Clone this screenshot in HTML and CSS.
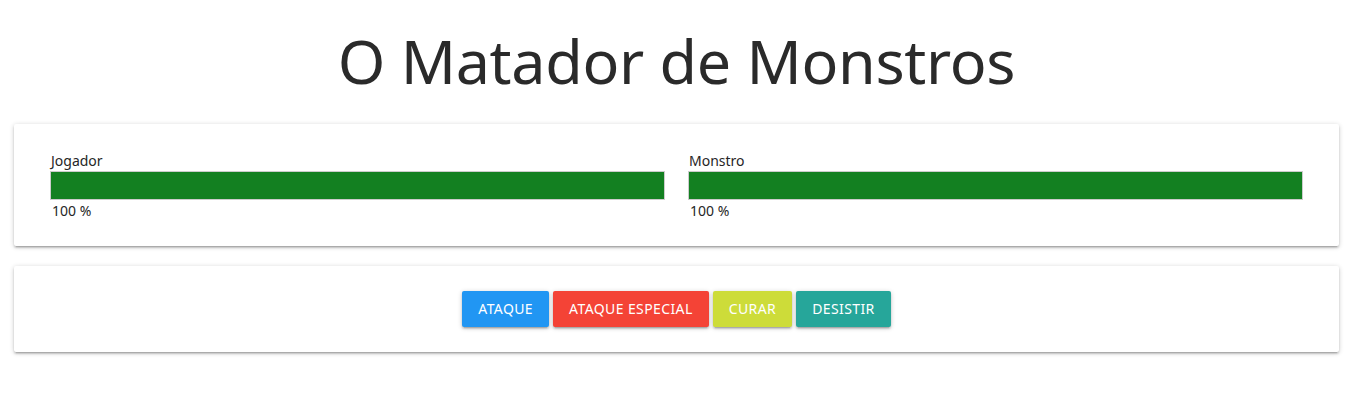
FILE: index.html
```html
<!DOCTYPE html>
<html lang="pt">
<head>
<meta charset="utf-8">
<title>O Matador de Monstros</title>
<link rel="stylesheet" href="styles.css">
</head>
<body>
<h1 class="title">O Matador de Monstros</h1>
<section class="card scores">
  <div class="score">
    <div class="label">Jogador</div>
    <div class="bar"><div class="fill" style="width: 100%"></div></div>
    <div class="pct">100 %</div>
  </div>
  <div class="score">
    <div class="label">Monstro</div>
    <div class="bar"><div class="fill" style="width: 100%"></div></div>
    <div class="pct">100 %</div>
  </div>
</section>
<section class="card actions">
  <button class="btn btn-blue">Ataque</button>
  <button class="btn btn-red">Ataque especial</button>
  <button class="btn btn-lime">Curar</button>
  <button class="btn btn-teal">Desistir</button>
</section>
</body>
</html>
```
FILE: styles.css
```css
html, body {
  margin: 0;
  padding: 0;
  background: #fff;
}
body {
  font-family: "Noto Sans", "Open Sans", sans-serif;
  color: #262626;
  padding: 0 13px 40px 14px;
}
.title {
  margin: 0;
  padding-top: 26px;
  height: 98px;
  box-sizing: border-box;
  text-align: center;
  font-weight: 400;
  font-size: 61px;
  line-height: 70px;
  letter-spacing: -0.3px;
  color: #2a2a2a;
}
.card {
  background: #fff;
  border-radius: 2px;
  box-shadow: 0 2px 2px 0 rgba(0,0,0,.14), 0 3px 1px -2px rgba(0,0,0,.12), 0 1px 5px 0 rgba(0,0,0,.2);
}
.scores {
  display: grid;
  grid-template-columns: 1fr 1fr;
  column-gap: 23px;
  padding: 27px 36px 24px;
  margin-top: 26px;
}
.label, .pct {
  font-size: 14px;
  color: #262626;
}
.label {
  padding-left: 1px;
  line-height: 20px;
}
.pct {
  padding-left: 2px;
  line-height: 22px;
}
.bar {
  height: 27px;
  border: 1px solid #ccc;
  background: #fff;
}
.fill {
  height: 100%;
  background: #138021;
}
.actions {
  margin-top: 20px;
  padding: 25px 0;
  display: flex;
  justify-content: center;
  gap: 4px;
}
.btn {
  height: 36px;
  padding: 0 16px;
  border: none;
  border-radius: 2px;
  color: #fff;
  font-family: "Noto Sans", "Open Sans", sans-serif;
  font-size: 14px;
  line-height: 34px;
  text-transform: uppercase;
  letter-spacing: 0.4px;
  box-shadow: 0 2px 2px 0 rgba(0,0,0,.14), 0 3px 1px -2px rgba(0,0,0,.12), 0 1px 5px 0 rgba(0,0,0,.2);
  cursor: pointer;
}
.btn-blue { background: #2196f3; }
.btn-red { background: #f44336; }
.btn-lime { background: #cddc39; }
.btn-teal { background: #26a69a; }
```
